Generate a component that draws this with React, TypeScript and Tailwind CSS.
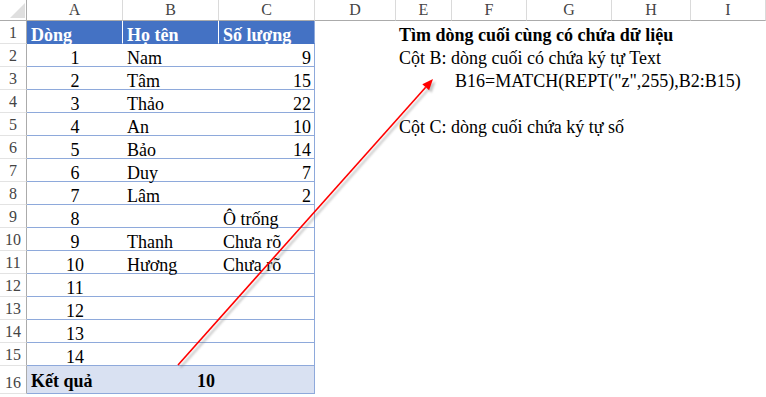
import type { ReactNode } from "react"

const LINE = "border-[#8ea9db]"

type Row = { a: string; b: string; c: string; cAlign?: "left" | "right"; side?: ReactNode; sideCol?: "E" | "F" }

const rows: Row[] = [
  { a: "1", b: "Nam", c: "9", side: "Cột B: dòng cuối có chứa ký tự Text", sideCol: "E" },
  { a: "2", b: "Tâm", c: "15", side: 'B16=MATCH(REPT("z",255),B2:B15)', sideCol: "F" },
  { a: "3", b: "Thảo", c: "22" },
  { a: "4", b: "An", c: "10", side: "Cột C: dòng cuối chứa ký tự số", sideCol: "E" },
  { a: "5", b: "Bảo", c: "14" },
  { a: "6", b: "Duy", c: "7" },
  { a: "7", b: "Lâm", c: "2" },
  { a: "8", b: "", c: "Ô trống", cAlign: "left" },
  { a: "9", b: "Thanh", c: "Chưa rõ", cAlign: "left" },
  { a: "10", b: "Hương", c: "Chưa rõ", cAlign: "left" },
  { a: "11", b: "", c: "" },
  { a: "12", b: "", c: "" },
  { a: "13", b: "", c: "" },
  { a: "14", b: "", c: "" },
]

function ColHead({ label }: { label: string }) {
  return (
    <div className="flex items-center justify-center border-r border-b border-r-[#dadada] border-b-[#ababab] text-[16px] leading-[16px] text-[#444]">
      {label}
    </div>
  )
}

function RowHead({ n }: { n: string }) {
  return (
    <div className="flex items-end justify-center border-r border-b border-r-[#ababab] border-b-[#e3e3e3] pb-[2px] text-[16px] leading-[16px] text-[#444]">
      {n}
    </div>
  )
}

function Arrow() {
  return (
    <svg className="pointer-events-none absolute left-0 top-0" width="766" height="397" viewBox="0 0 766 397">
      <defs>
        <filter id="blur" x="-10%" y="-10%" width="120%" height="120%">
          <feGaussianBlur stdDeviation="1" />
        </filter>
      </defs>
      <g transform="translate(2.5 2.5)" filter="url(#blur)" opacity="0.45">
        <line x1="178" y1="365" x2="425.7" y2="87.2" stroke="#7f7f7f" strokeWidth="2" />
        <polygon points="433,79 429.1,90.2 422.3,84.2" fill="#7f7f7f" />
      </g>
      <line x1="178" y1="365" x2="425.7" y2="87.2" stroke="#ff0000" strokeWidth="1.6" />
      <polygon points="433,79 429.1,90.2 422.3,84.2" fill="#ff0000" />
    </svg>
  )
}

export default function App() {
  return (
    <div className="relative h-[397px] w-[766px] overflow-hidden bg-white font-['Liberation_Serif','Times_New_Roman',serif] text-black">
      <div className="grid grid-cols-[27px_96px_96px_96px_81px_56px_75px_85px_79px_1fr] grid-rows-[21px_repeat(15,23px)_28px_1fr]">
        {/* column headers */}
        <div className="relative border-r border-b border-r-[#ababab] border-b-[#ababab]">
          <svg className="absolute left-[10px] top-[3px]" width="15" height="15" viewBox="0 0 15 15">
            <polygon points="0,15 15,15 15,0" fill="#dfdfdf" />
          </svg>
        </div>
        {["A", "B", "C", "D", "E", "F", "G", "H", "I"].map((l) => (
          <ColHead key={l} label={l} />
        ))}

        {/* row 1 - table header */}
        <RowHead n="1" />
        <div className="flex items-end border-r border-b border-r-white border-b-[#4472c4] bg-[#4472c4] pl-[4px] text-[18px] font-bold leading-[16px] text-white">
          Dòng
        </div>
        <div className="flex items-end border-r border-b border-r-white border-b-[#4472c4] bg-[#4472c4] pl-[4px] text-[18px] font-bold leading-[16px] text-white">
          Họ tên
        </div>
        <div className="flex items-end border-r border-b border-r-[#8ea9db] border-b-[#4472c4] bg-[#4472c4] pl-[4px] text-[18px] font-bold leading-[16px] text-white">
          Số lượng
        </div>
        <div />
        <div className="col-span-5 flex items-end whitespace-nowrap pb-[1px] pl-[3px] text-[18px] font-bold leading-[16px]">
          Tìm dòng cuối cùng có chứa dữ liệu
        </div>

        {/* rows 2-15 */}
        {rows.map((r, i) => (
          <Line key={i} n={String(i + 2)} row={r} />
        ))}

        {/* row 16 - result */}
        <RowHead n="16" />
        <div className={`flex items-end border-b ${LINE} bg-[#d9e1f2] pb-[4px] pl-[4px] text-[18px] font-bold leading-[16px]`}>
          Kết quả
        </div>
        <div className={`flex items-end justify-end border-b ${LINE} bg-[#d9e1f2] pb-[4px] pr-[4px] text-[18px] font-bold leading-[16px]`}>
          10
        </div>
        <div className={`border-r border-b ${LINE} bg-[#d9e1f2]`} />
        <div className="col-span-6" />

        {/* row 17 (cut off) */}
        <div className="border-r border-r-[#ababab]" />
        <div className="col-span-9" />
      </div>
      <Arrow />
    </div>
  )
}

function Line({ n, row }: { n: string; row: Row }) {
  const cell = `flex items-end border-b ${LINE} text-[18px] leading-[16px]`
  return (
    <>
      <RowHead n={n} />
      <div className={`${cell} justify-center`}>{row.a}</div>
      <div className={`${cell} pl-[4px]`}>{row.b}</div>
      <div className={`${cell} border-r ${row.cAlign === "left" ? "pl-[4px]" : "justify-end pr-[3px]"}`}>{row.c}</div>
      <div />
      {row.side && row.sideCol === "E" ? (
        <div className="col-span-5 flex items-end whitespace-nowrap pb-[1px] pl-[3px] text-[18px] leading-[16px]">{row.side}</div>
      ) : row.side && row.sideCol === "F" ? (
        <>
          <div />
          <div className="col-span-4 flex items-end whitespace-nowrap pb-[1px] pl-[3px] text-[18px] leading-[16px]">{row.side}</div>
        </>
      ) : (
        <div className="col-span-5" />
      )}
    </>
  )
}
